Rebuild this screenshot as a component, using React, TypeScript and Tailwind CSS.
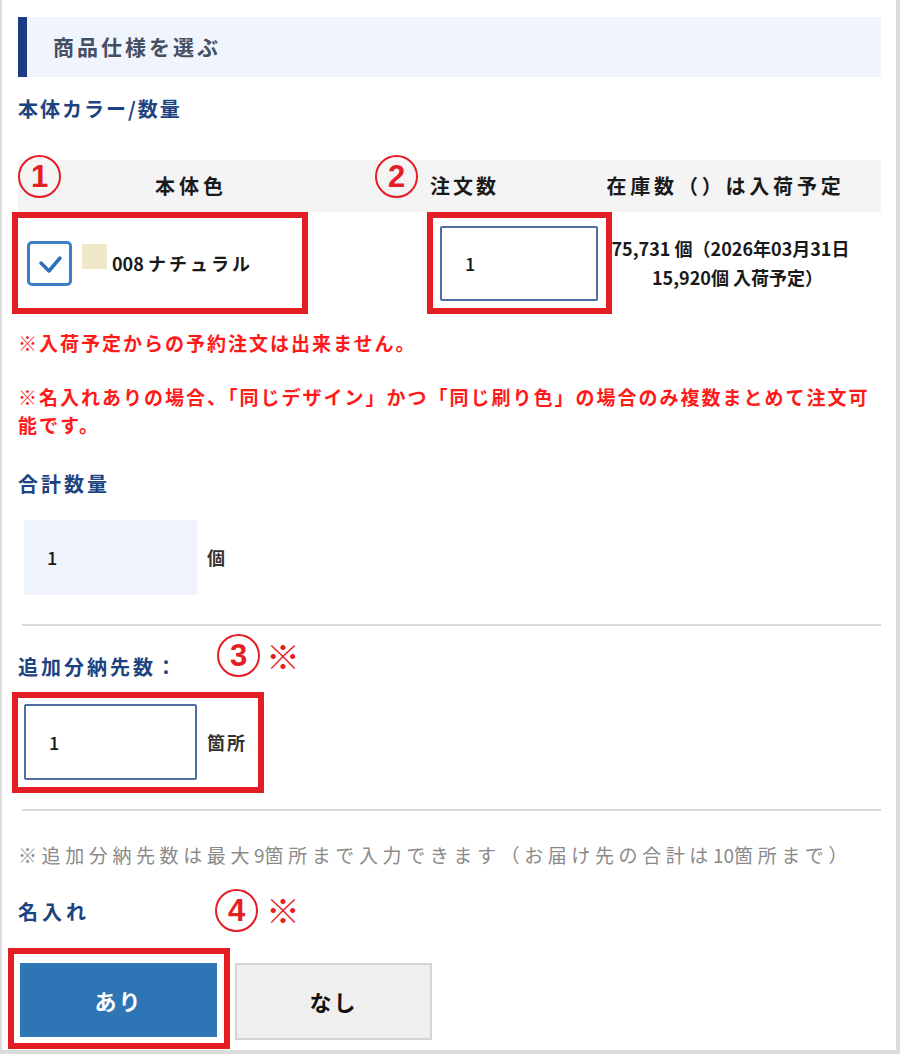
import React from 'react';

const jp = { fontFamily: '"Noto Sans CJK JP", "Noto Sans", sans-serif' };

function Circled({ n, left, top }: { n: string; left: number; top: number }) {
  return (
    <div
      className="absolute flex h-[43px] w-[43px] items-center justify-center rounded-full border-2 border-[#e31e24] text-[31px] font-bold leading-none text-[#e31e24]"
      style={{ left, top, fontFamily: '"Liberation Sans", Arial, sans-serif' }}
    >
      {n}
    </div>
  );
}

function Kome({ left, top }: { left: number; top: number }) {
  return (
    <div className="absolute text-[34px] font-normal leading-none text-[#e31e24]" style={{ left, top, ...jp }}>
      ※
    </div>
  );
}

function RedFrame({ left, top, w, h }: { left: number; top: number; w: number; h: number }) {
  return (
    <div
      className="pointer-events-none absolute border-[6px] border-[#e31e24]"
      style={{ left, top, width: w, height: h }}
    />
  );
}

export default function App() {
  return (
    <div
      className="relative box-border h-[1054px] w-[900px] overflow-hidden border-b-4 border-l-2 border-r-4 border-[#dcdcdc] bg-white pl-4 pr-[15px] pt-[17px]"
      style={jp}
    >
      {/* section heading */}
      <div className="flex h-[60px] items-center border-l-[9px] border-[#1d3a84] bg-[#f0f4fc] pl-[26px]">
        <span className="text-[21px] font-bold tracking-[3px] text-[#454f63]">商品仕様を選ぶ</span>
      </div>

      <div className="flex h-[64px] items-center">
        <span className="text-[20px] font-bold tracking-[2px] text-[#1d4380]">本体カラー/数量</span>
      </div>

      {/* color / quantity table */}
      <div className="mt-[19px]">
        <div className="flex h-[52px] items-center bg-[#f4f4f4] text-[20px] font-bold text-[#1a1a1a]">
          <div className="w-[346px] text-center tracking-[4px]">本体色</div>
          <div className="w-[236px] pl-[66px] tracking-[3px]">注文数</div>
          <div className="flex-1 pr-[30px] text-center tracking-[3.8px] whitespace-nowrap">在庫数（）は入荷予定</div>
        </div>
        <div className="flex h-[102px] items-center">
          <div className="flex w-[346px] items-center pl-[9px]">
            <div className="flex h-[45px] w-[45px] items-center justify-center rounded-[5px] border-[3px] border-[#3c7fc8] bg-white">
              <svg width="30" height="30" viewBox="0 0 30 30">
                <path d="M6 15 L14 23 L25 10" fill="none" stroke="#2f6fb5" strokeWidth="3.5" strokeLinecap="round" strokeLinejoin="round" />
              </svg>
            </div>
            <div className="ml-[10px] mt-[3px] h-[25px] w-[25px] self-start bg-[#f0e6c8]" />
            <span className="ml-[5px] text-[18px] font-bold text-[#1a1a1a]">
              008 <span className="tracking-[3px]">ナチュラル</span>
            </span>
          </div>
          <div className="w-[236px] pl-[76px]">
            <div className="flex h-[75px] w-[158px] items-center rounded-[2px] border-2 border-[#4d6da3] pl-[23px] text-[18px] font-medium text-[#1a1a1a]">
              1
            </div>
          </div>
          <div className="flex-1 pr-[6px] text-center text-[18px] font-bold leading-[29px] text-[#1a1a1a] whitespace-nowrap">
            <div className="-ml-[14px]">75,731 個（2026年03月31日</div>
            <div>15,920個 入荷予定）</div>
          </div>
        </div>
      </div>

      {/* notes */}
      <div className="flex h-[58px] items-center text-[19px] font-bold tracking-[2px] text-[#ff1a1a]">
        ※入荷予定からの予約注文は出来ません。
      </div>
      <div className="mt-[11px] text-[19px] font-bold leading-[28px] tracking-[2px] text-[#ff1a1a]">
        <div className="whitespace-nowrap">※名入れありの場合、「同じデザイン」かつ「同じ刷り色」の場合のみ複数まとめて注文可</div>
        <div>能です。</div>
      </div>

      {/* total */}
      <div className="mt-[25px] flex h-[40px] items-center">
        <span className="text-[20px] font-bold tracking-[3px] text-[#1d4380]">合計数量</span>
      </div>
      <div className="mt-[16px] flex items-center pl-[6px]">
        <div className="flex h-[75px] w-[173px] items-center bg-[#eff3fb] pl-[23px] text-[18px] font-medium text-[#1a1a1a]">1</div>
        <span className="ml-[10px] text-[18px] font-bold text-[#333]">個</span>
      </div>

      <div className="ml-[4px] mt-[29px] h-[2px] bg-[#d9d9d9]" />

      {/* additional deliveries */}
      <div className="mt-[21px] flex h-[40px] items-center">
        <span className="text-[20px] font-bold tracking-[3px] text-[#1d4380]">追加分納先数：</span>
      </div>
      <div className="mt-[17px] flex items-center pl-[6px]">
        <div className="flex h-[76px] w-[173px] items-center rounded-[2px] border-2 border-[#4d6da3] pl-[23px] text-[18px] font-medium text-[#1a1a1a]">
          1
        </div>
        <span className="ml-[10px] text-[18px] font-bold tracking-[2px] text-[#333]">箇所</span>
      </div>

      <div className="ml-[4px] mt-[29px] h-[2px] bg-[#d9d9d9]" />

      <div className="mt-[24px] flex h-[40px] items-center">
        <span className="text-[19px] font-normal tracking-[4.6px] text-[#8a8a8a] whitespace-nowrap">
          ※追加分納先数は最大<span className="tracking-normal">9</span>箇所まで入力できます（お届け先の合計は<span className="tracking-normal">10</span>箇所まで）
        </span>
      </div>

      {/* name printing */}
      <div className="mt-[17px] flex h-[40px] items-center">
        <span className="text-[20px] font-bold tracking-[4px] text-[#1d4380]">名入れ</span>
      </div>
      <div className="mt-[31px] flex items-start gap-[18px] pl-[2px]">
        <button className="flex h-[74px] w-[197px] items-center justify-center bg-[#2e75b6] text-[22px] font-bold tracking-[2px] text-white">
          あり
        </button>
        <button className="flex h-[77px] w-[197px] items-center justify-center border-2 border-[#d4d4d4] bg-[#efefef] text-[22px] font-bold tracking-[2px] text-[#111]">
          なし
        </button>
      </div>

      {/* annotations */}
      <Circled n="1" left={16} top={155} />
      <Circled n="2" left={373} top={155} />
      <RedFrame left={10} top={212} w={296} h={102} />
      <RedFrame left={425} top={212} w={185} h={102} />
      <Circled n="3" left={215} top={634} />
      <Kome left={264} top={639} />
      <RedFrame left={10} top={692} w={252} h={101} />
      <Circled n="4" left={213} top={889} />
      <Kome left={264} top={893} />
      <RedFrame left={6} top={948} w={222} h={101} />
    </div>
  );
}
